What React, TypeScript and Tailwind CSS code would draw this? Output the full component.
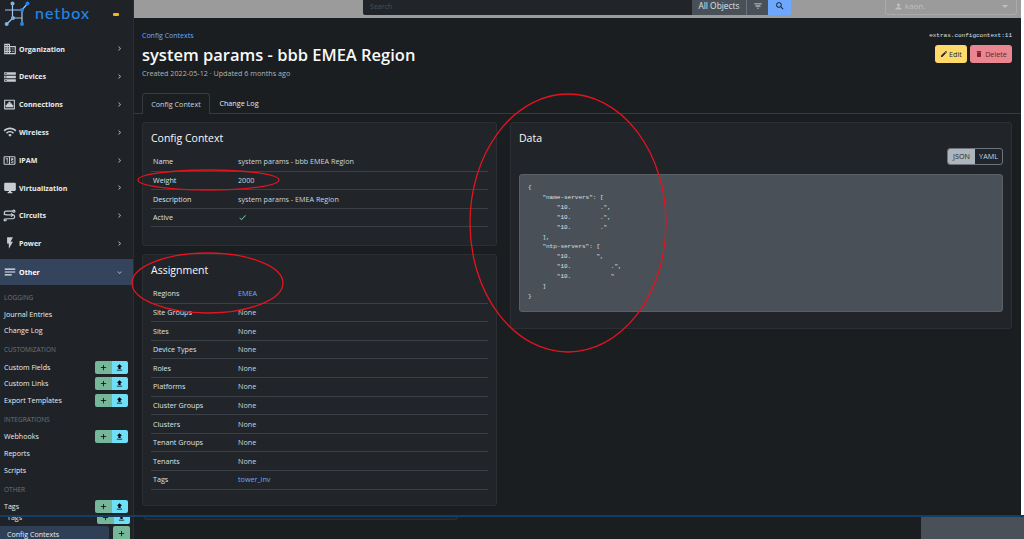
import type { ReactNode } from "react";
import {
  MdAdd,
  MdBusiness,
  MdCheck,
  MdChevronRight,
  MdDelete,
  MdEdit,
  MdExpandMore,
  MdFileUpload,
  MdFilterList,
  MdFlashOn,
  MdNotes,
  MdPerson,
  MdSearch,
  MdStorage,
  MdWifi,
  MdDesktopWindows,
} from "react-icons/md";

const EthernetIcon = () => (
  <svg viewBox="0 0 24 24" className="h-[13px] w-[13px]" fill="currentColor">
    <path d="M3 3h18a1 1 0 0 1 1 1v16a1 1 0 0 1-1 1H3a1 1 0 0 1-1-1V4a1 1 0 0 1 1-1zm1 2v14h16V5H4zm6 2h4v3h3v3h2v4H5v-4h2v-3h3V7z" />
  </svg>
);

const CounterIcon = () => (
  <svg viewBox="0 0 24 24" className="h-[13px] w-[13px]" fill="currentColor">
    <path d="M3 4h18a2 2 0 0 1 2 2v12a2 2 0 0 1-2 2H3a2 2 0 0 1-2-2V6a2 2 0 0 1 2-2zm0 2v12h8V6H3zm10 0v12h8V6h-8zM5 8h4v1.500H5V8zm2 1.500h1.500V16H7V9.500zM15 8h4v3.500h-2.500V13H19v3h-4v-1.500h2.500V13H15V8z" />
  </svg>
);

const CircuitIcon = () => (
  <svg viewBox="0 0 24 24" className="h-[13px] w-[13px]" fill="none" stroke="currentColor" strokeWidth="2.2">
    <circle cx="20" cy="4" r="2" />
    <circle cx="4" cy="20" r="2" />
    <path d="M18 4H6a3.500 3.500 0 0 0 0 7h12a3.500 3.500 0 0 1 0 7H6" />
    <path d="M3 8l-1 3M15 8l3 3-3 3" />
  </svg>
);

const Logo = () => (
  <svg viewBox="0 0 32 28" className="h-[28px] w-[32px]" fill="none">
    <path d="M12.500 3.500V18M5 10h17M27.500 3.500 22 10M22 10v14M13 18h9M13 18l-6.300 6" stroke="#9fc6ec" strokeWidth="1.200" />
    <circle cx="12.500" cy="3.500" r="2" fill="#7db3e6" />
    <circle cx="27.500" cy="3.500" r="2" fill="#1f86e8" />
    <circle cx="22" cy="10" r="2" fill="#1f86e8" />
    <circle cx="13" cy="18" r="2" fill="#7db3e6" />
    <circle cx="6.700" cy="24" r="2" fill="#7db3e6" />
    <circle cx="22" cy="24" r="2" fill="#1f86e8" />
  </svg>
);

const navItems: { label: string; icon: ReactNode }[] = [
  { label: "Organization", icon: <MdBusiness size={14} /> },
  { label: "Devices", icon: <MdStorage size={14} /> },
  { label: "Connections", icon: <EthernetIcon /> },
  { label: "Wireless", icon: <MdWifi size={14} /> },
  { label: "IPAM", icon: <CounterIcon /> },
  { label: "Virtualization", icon: <MdDesktopWindows size={14} /> },
  { label: "Circuits", icon: <CircuitIcon /> },
  { label: "Power", icon: <MdFlashOn size={14} /> },
];

const otherMenu: { section: string; items: { label: string; buttons?: boolean }[] }[] = [
  {
    section: "LOGGING",
    items: [{ label: "Journal Entries" }, { label: "Change Log" }],
  },
  {
    section: "CUSTOMIZATION",
    items: [
      { label: "Custom Fields", buttons: true },
      { label: "Custom Links", buttons: true },
      { label: "Export Templates", buttons: true },
    ],
  },
  {
    section: "INTEGRATIONS",
    items: [{ label: "Webhooks", buttons: true }, { label: "Reports" }, { label: "Scripts" }],
  },
  {
    section: "OTHER",
    items: [{ label: "Tags", buttons: true }],
  },
];

const AddImport = () => (
  <div className="flex h-[13px] w-[33px] overflow-hidden rounded-[2px] text-black">
    <span className="flex flex-1 items-center justify-center bg-[#75b798]">
      <MdAdd size={9} />
    </span>
    <span className="flex flex-1 items-center justify-center bg-[#6edff6]">
      <MdFileUpload size={9} />
    </span>
  </div>
);

const Sidebar = () => (
  <aside className="flex w-[134px] shrink-0 flex-col border-r border-[#2a2e32] bg-[#1f2327] text-[#e9ecef]">
    <div className="flex h-[35px] shrink-0 items-start">
      <Logo />
      <span className="mt-[3px] ml-[3px] font-['Lato',sans-serif] text-[16px] leading-[20px] font-medium tracking-[1px] text-[#1f86e8]">
        netbox
      </span>
      <span className="mt-[13px] ml-[23px] h-[3px] w-[6px] rounded-[1px] bg-[#f2b90f]" />
    </div>
    {navItems.map((item) => (
      <div key={item.label} className="flex h-[27.800px] shrink-0 items-center pr-[9px] pl-[3px]">
        <span className="flex w-[16px] shrink-0 items-center text-[#c6ccd2]">{item.icon}</span>
        <span className="flex-1 text-[7.100px] font-bold">{item.label}</span>
        <MdChevronRight size={9} className="text-[#adb5bd]" />
      </div>
    ))}
    <div className="mt-[2px] flex h-[26px] shrink-0 items-center bg-[#34445c] pr-[9px] pl-[3px]">
      <MdNotes size={14} className="w-[16px] shrink-0 pr-[2px] text-[#e9ecef]" />
      <span className="flex-1 text-[7.100px] font-bold text-white">Other</span>
      <MdExpandMore size={9} className="text-[#adb5bd]" />
    </div>
    <div className="flex flex-col px-[4px] pt-[3.500px]">
      {otherMenu.map((group) => (
        <div key={group.section} className="flex flex-col pb-[2.800px]">
          <div className="flex h-[17px] items-center text-[6.500px] text-[#6c757d]">{group.section}</div>
          {group.items.map((item) => (
            <div key={item.label} className="flex h-[16.600px] items-center justify-between pr-[1px] text-[7.100px]">
              <span>{item.label}</span>
              {item.buttons && <AddImport />}
            </div>
          ))}
        </div>
      ))}
    </div>
  </aside>
);

const TopBar = () => (
  <div className="flex h-[18px] shrink-0 items-start bg-[#9b9b9b] pr-[4px] pl-[229px]">
    <div className="flex h-[15px] w-[428px] overflow-hidden rounded-b-[2px] pb-0 text-[#dee2e6]">
      <div className="flex flex-1 items-center bg-[#212529] px-[7px] pb-[2px] text-[7.100px] text-[#495057]">Search</div>
      <div className="flex w-[54px] items-center justify-center bg-[#495057] pb-[3px] text-[8.400px]">All Objects</div>
      <div className="flex w-[22px] items-center justify-center border-l border-[#6c757d] bg-[#495057] pb-[3px]">
        <MdFilterList size={10} />
      </div>
      <div className="flex w-[23px] items-center justify-center bg-[#6ea8fe] pb-[3px] text-[#101820]">
        <MdSearch size={10} />
      </div>
    </div>
    <div className="ml-auto flex h-[15px] w-[132px] items-center rounded-b-[3px] border border-t-0 border-[#ababab] pr-[8px] pb-[2px] pl-[8px] text-[8px] text-[#c0c0c0]">
      <MdPerson size={9} />
      <span className="ml-[2px] flex-1">kaon.</span>
      <span className="h-0 w-0 border-x-[3px] border-t-[3px] border-x-transparent border-t-[#c0c0c0]" />
    </div>
  </div>
);

const Card = ({ title, children, className }: { title: string; children: ReactNode; className: string }) => (
  <div className={`rounded-[3px] border border-[#2c3034] bg-[#212529] px-[8px] ${className}`}>
    <h5 className="pt-[8px] text-[10.500px] leading-[14px] font-medium text-[#f8f9fa]">{title}</h5>
    {children}
  </div>
);

const Row = ({ label, children }: { label: string; children: ReactNode }) => (
  <div className="flex h-[18.600px] items-center border-b border-[#3b4046] pl-[2px] text-[7.200px]">
    <span className="w-[85px] shrink-0 text-[#dee2e6]">{label}</span>
    <span className="text-[#ced4da]">{children}</span>
  </div>
);

const assignments: [string, string][] = [
  ["Site Groups", "None"],
  ["Sites", "None"],
  ["Device Types", "None"],
  ["Roles", "None"],
  ["Platforms", "None"],
  ["Cluster Groups", "None"],
  ["Clusters", "None"],
  ["Tenant Groups", "None"],
  ["Tenants", "None"],
];

const jsonData = `{
    "name-servers": [
        "10.        .",
        "10.        .",
        "10.        ."
    ],
    "ntp-servers": [
        "10.       ",
        "10.           .",
        "10.           "
    ]
}`;

const Main = () => (
  <main className="flex min-w-0 flex-1 flex-col bg-[#1a1e21] text-[#dee2e6]">
    <TopBar />
    <div className="flex h-[75px] shrink-0 justify-between pr-[9px] pl-[8px]">
      <div>
        <div className="pt-[13px] text-[7px] leading-[9px] text-[#6ea8fe]">Config Contexts</div>
        <h1 className="pt-[3px] text-[16.500px] leading-[24px] font-semibold text-[#f8f9fa]">
          system params - bbb EMEA Region
        </h1>
        <div className="pt-[2px] text-[7.200px] leading-[9px] text-[#adb5bd]">Created 2022-05-12 · Updated 6 months ago</div>
      </div>
      <div className="flex flex-col items-end">
        <div className="pt-[13px] font-['Liberation_Mono',monospace] text-[6px] leading-[9px] text-[#dee2e6]">
          extras.configcontext:11
        </div>
        <div className="flex gap-[3px] pt-[5px] text-[7.200px] text-[#212529]">
          <span className="flex h-[18px] w-[32px] items-center justify-center gap-[1px] rounded-[3px] bg-[#ffda6a]">
            <MdEdit size={8} />
            Edit
          </span>
          <span className="flex h-[18px] w-[42px] items-center justify-center gap-[2px] rounded-[3px] bg-[#ea868f] text-[#5c2a30]">
            <MdDelete size={8} className="text-[#842029]" />
            Delete
          </span>
        </div>
      </div>
    </div>
    <div className="flex h-[21px] shrink-0 border-b border-[#373b3e] pl-[8px] text-[7.200px]">
      <span className="flex h-[21px] w-[68px] items-center justify-center rounded-t-[3px] border border-b-0 border-[#373b3e] bg-[#1a1e21] pt-[1px] text-[#ced4da]">
        Config Context
      </span>
      <span className="flex h-[20px] w-[58px] items-center justify-center pt-[1px] text-[#e9ecef]">Change Log</span>
    </div>
    <div className="flex items-start gap-[13px] pt-[8px] pr-[9px] pl-[8px]">
      <div className="flex w-[355px] shrink-0 flex-col gap-[8px]">
        <Card title="Config Context" className="h-[124px]">
          <div className="pt-[8px]">
            <Row label="Name">system params - bbb EMEA Region</Row>
            <Row label="Weight">2000</Row>
            <Row label="Description">system params - EMEA Region</Row>
            <Row label="Active">
              <MdCheck size={9} className="text-[#75b798]" />
            </Row>
          </div>
        </Card>
        <Card title="Assignment" className="h-[252px]">
          <div className="pt-[8px]">
            <Row label="Regions">
              <span className="text-[#6ea8fe]">EMEA</span>
            </Row>
            {assignments.map(([label, value]) => (
              <Row key={label} label={label}>
                {value}
              </Row>
            ))}
            <Row label="Tags">
              <span className="text-[#6ea8fe]">tower_inv</span>
            </Row>
          </div>
        </Card>
      </div>
      <Card title="Data" className="h-[207px] flex-1">
        <div className="flex justify-end pt-[3px]">
          <div className="flex h-[17px] overflow-hidden rounded-[3px] border border-[#6c757d] text-[7.200px]">
            <span className="flex w-[27px] items-center justify-center bg-[#adb5bd] text-[#212529]">JSON</span>
            <span className="flex w-[27px] items-center justify-center text-[#ced4da]">YAML</span>
          </div>
        </div>
        <pre className="mt-[9px] h-[138px] rounded-[3px] border border-[#596068] bg-[#495057] px-[8px] pt-[8px] font-['Liberation_Mono',monospace] text-[6px] leading-[9.900px] text-[#dee2e6]">
          {jsonData}
        </pre>
      </Card>
    </div>
  </main>
);

// second screenshot stitched under the blue line
const BottomStrip = () => (
  <div className="flex h-[22px] shrink-0">
    <div className="flex w-[134px] shrink-0 flex-col overflow-hidden border-r border-[#2a2e32] bg-[#1f2327] text-[7.100px] text-[#e9ecef]">
      <div className="flex h-[9px] shrink-0 items-start justify-between overflow-hidden pr-[3px] pl-[7px] leading-[9px]">
        <span className="-mt-[4px]">Tags</span>
        <div className="-mt-[6px]">
          <AddImport />
        </div>
      </div>
      <div className="flex h-[13px] shrink-0 items-center gap-[4px] pr-[3px]">
        <span className="flex h-[13px] w-[110px] items-center rounded-tr-[3px] bg-[#2f4056] pt-[3px] pl-[7px]">Config Contexts</span>
        <span className="flex h-[13px] w-[17px] items-center justify-center rounded-t-[2px] bg-[#75b798] pt-[2px] text-black">
          <MdAdd size={9} />
        </span>
      </div>
    </div>
    <div className="flex flex-1 items-start bg-[#1a1e21]">
      <div className="ml-[10px] h-[3px] w-[314px] rounded-b-[3px] border-x border-b border-[#2c3034] bg-[#212529]" />
      <div className="ml-auto h-full w-[103px] bg-[#495057]" />
    </div>
  </div>
);

const App = () => (
  <div className="relative flex h-[539px] w-[1024px] flex-col overflow-hidden bg-[#1a1e21] font-['Open_Sans',sans-serif]">
    <div className="flex h-[515px] shrink-0">
      <Sidebar />
      <Main />
      <div className="w-[3px] shrink-0 bg-white" />
    </div>
    <div className="h-[2px] shrink-0 bg-[#0f3f66]" />
    <BottomStrip />
    {/* hand drawn red annotations */}
    <svg className="pointer-events-none absolute inset-0" width="1024" height="539" fill="none" stroke="#e3141e" strokeWidth="1.300">
      <ellipse cx="568" cy="223" rx="98" ry="129" />
      <ellipse cx="208.500" cy="180" rx="70.500" ry="10" />
      <ellipse cx="207.500" cy="283" rx="75.500" ry="30" />
    </svg>
  </div>
);

export default App;
